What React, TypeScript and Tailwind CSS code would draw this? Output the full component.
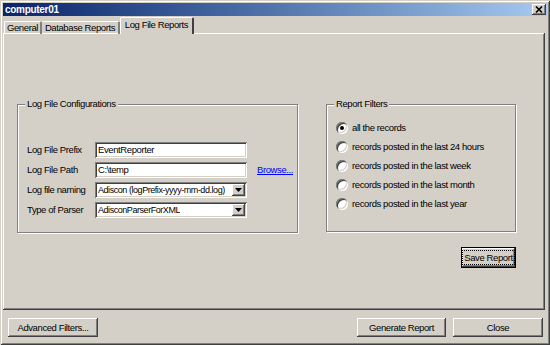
import React from "react";

const raised =
  "shadow-[inset_-1px_-1px_0_#404040,inset_1px_1px_0_#ffffff,inset_-2px_-2px_0_#808080,inset_2px_2px_0_#d4d0c8]";
const sunken =
  "shadow-[inset_1px_1px_0_#808080,inset_-1px_-1px_0_#ffffff,inset_2px_2px_0_#404040,inset_-2px_-2px_0_#d4d0c8]";

const filters = [
  "all the records",
  "records posted in the last 24 hours",
  "records posted in the last week",
  "records posted in the last month",
  "records posted in the last year",
];

const TextField = ({ value }: { value: string }) => (
  <div className={`w-[152px] h-[16px] bg-white ${sunken} flex items-center pl-[3px] text-black`}>
    {value}
  </div>
);

const SelectField = ({ value }: { value: string }) => (
  <div className={`w-[152px] h-[16px] bg-white ${sunken} flex items-center justify-between pl-[3px] pr-[2px] text-black`}>
    <span className="min-w-0 overflow-hidden text-[9px] tracking-[-0.45px]">{value}</span>
    <div className={`shrink-0 ml-[2px] w-[13px] h-[12px] bg-[#d4d0c8] ${raised} flex items-center justify-center`}>
      <svg width="7" height="4" viewBox="0 0 7 4">
        <polygon points="0,0 7,0 3.5,4" fill="#000" />
      </svg>
    </div>
  </div>
);

const Button = ({ label, width }: { label: string; width: string }) => (
  <div className={`${width} h-[19px] bg-[#d4d0c8] ${raised} flex items-center justify-center text-black`}>
    {label}
  </div>
);

export default function App() {
  return (
    <div
      className={`w-[550px] h-[345px] bg-[#d4d0c8] p-[3px] flex flex-col text-[9.5px] tracking-[-0.4px] leading-none whitespace-nowrap font-['Liberation_Sans',Arial,sans-serif] shadow-[inset_1px_1px_0_#d4d0c8,inset_-1px_-1px_0_#404040,inset_2px_2px_0_#ffffff,inset_-2px_-2px_0_#808080]`}
    >
      {/* title bar */}
      <div className="h-[13px] w-[544px] bg-linear-to-r from-[#0a246a] to-[#a6caf0] flex items-center justify-between pl-[2px] pr-[1px]">
        <span className="text-white font-bold text-[10px] tracking-[-0.3px]">computer01</span>
        <div className={`w-[14px] h-[11px] bg-[#d4d0c8] ${raised} flex items-center justify-center`}>
          <svg width="8" height="7" viewBox="0 0 8 7">
            <path d="M1 0.5 L7 6.5 M7 0.5 L1 6.5" stroke="#000" strokeWidth="1.6" />
          </svg>
        </div>
      </div>

      {/* tabs */}
      <div className="flex items-end h-[17px] mt-[1px] pl-[1px] relative z-10 mb-[-1px]">
        <div className="w-[38px] h-[13px] border-t border-l border-white border-r-2 border-r-[#808080] rounded-t-[2px] flex items-center justify-center text-black">
          General
        </div>
        <div className="w-[78px] h-[13px] border-t border-white border-r-2 border-r-[#808080] rounded-t-[2px] flex items-center justify-center text-black">
          Database Reports
        </div>
        <div className="w-[74px] h-[17px] bg-[#d4d0c8] border-t border-l border-white border-r-2 border-r-[#404040] rounded-t-[2px] flex items-center justify-center text-black pb-[2px]">
          Log File Reports
        </div>
      </div>

      {/* tab panel */}
      <div className={`w-[542px] h-[277px] ${raised} pt-[71px] pl-[14px] flex flex-col`}>
        <div className="w-[499px] flex flex-col">
          <div className="flex gap-[28px]">
            {/* log file configurations */}
            <div className="relative w-[281px] h-[129px] border border-[#808080] shadow-[1px_1px_0_#ffffff,inset_1px_1px_0_#ffffff] pt-[37px] pl-[9px] flex flex-col gap-[4px] text-black">
              <span className="absolute -top-[6px] left-[7px] bg-[#d4d0c8] px-[2px]">Log File Configurations</span>
              <div className="flex items-center h-[16px]">
                <span className="w-[68px]">Log File Prefix</span>
                <TextField value="EventReporter" />
              </div>
              <div className="flex items-center h-[16px]">
                <span className="w-[68px]">Log File Path</span>
                <TextField value="C:\temp" />
                <span className="ml-[10px] text-[#0000ff] underline">Browse...</span>
              </div>
              <div className="flex items-center h-[16px]">
                <span className="w-[68px]">Log file naming</span>
                <SelectField value="Adiscon (logPrefix-yyyy-mm-dd.log)" />
              </div>
              <div className="flex items-center h-[16px]">
                <span className="w-[68px]">Type of Parser</span>
                <SelectField value="AdisconParserForXML" />
              </div>
            </div>

            {/* report filters */}
            <div className="relative w-[190px] h-[128px] border border-[#808080] shadow-[1px_1px_0_#ffffff,inset_1px_1px_0_#ffffff] pt-[13px] pl-[9px] flex flex-col text-black">
              <span className="absolute -top-[6px] left-[7px] bg-[#d4d0c8] px-[2px]">Report Filters</span>
              {filters.map((f, i) => (
                <div key={f} className="flex items-center h-[19px] gap-[4px]">
                  <div className={`w-[12px] h-[12px] rounded-full bg-white ${sunken} flex items-center justify-center`}>
                    {i === 0 && <div className="w-[4px] h-[4px] rounded-full bg-black" />}
                  </div>
                  <span>{f}</span>
                </div>
              ))}
            </div>
          </div>

          {/* save report */}
          <div className="self-end mt-[14px] w-[55px] h-[21px] border border-black bg-[#d4d0c8]">
            <div className={`w-full h-full ${raised} flex items-center justify-center`}>
              <span className="border border-dotted border-black px-[1px] py-[2px] text-black">Save Report</span>
            </div>
          </div>
        </div>
      </div>

      {/* bottom buttons */}
      <div className="flex items-center mt-[8px] pl-[5px]">
        <Button label="Advanced Filters..." width="w-[90px]" />
        <div className="flex-1" />
        <div className="flex gap-[7px] pr-[4px]">
          <Button label="Generate Report" width="w-[89px]" />
          <Button label="Close" width="w-[90px]" />
        </div>
      </div>
    </div>
  );
}
